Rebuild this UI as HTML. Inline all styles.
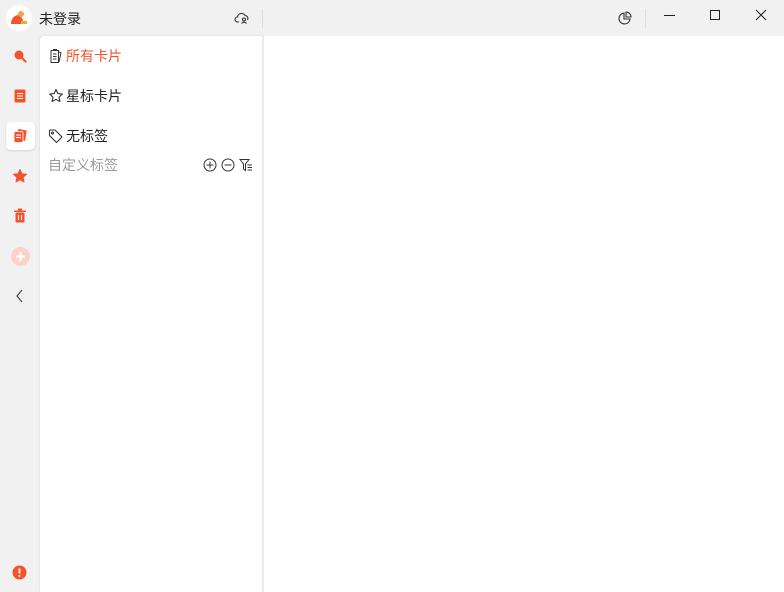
<!DOCTYPE html>
<html><head><meta charset="utf-8"><style>
*{margin:0;padding:0;box-sizing:border-box}
body{width:784px;height:592px;background:#f1f1f1;font-family:"Liberation Sans","Noto Sans CJK SC",sans-serif;position:relative;overflow:hidden}
.abs{position:absolute}
.panel{left:40px;top:36px;width:222px;height:556px;background:#fff;border-radius:4px 0 0 0;box-shadow:0 0 2px rgba(0,0,0,.12)}
.main{left:263px;top:36px;width:521px;height:556px;background:#fff;border-left:1px solid #ececec}
.item{position:absolute;left:8px;font-size:14px;color:#222;display:flex;align-items:center;gap:2px}
svg{display:block}
</style></head><body>
<div class="abs" style="left:6px;top:5px;width:26px;height:26px;border-radius:50%;background:#fff"></div>
<svg class="abs" style="left:9px;top:9px" width="20" height="18" viewBox="0 0 20 18"><path d="M2 14 Q3 7 9 6 Q13 7 14 12 L14 15 L2 15Z" fill="#f2542d"/><circle cx="12" cy="5" r="3" fill="#f7a24b"/><rect x="12" y="12" width="6" height="3" fill="#f7a24b"/></svg>
<div class="abs" style="left:39px;top:9px;font-size:14px;color:#222">未登录</div>
<svg class="abs" style="left:234px;top:11px" width="16" height="14" viewBox="0 0 16 14" fill="none" stroke="#333" stroke-width="1.1"><path d="M5 11H3.5A2.5 2.5 0 0 1 3.5 6A4 4 0 0 1 11 4.5A3 3 0 0 1 13.5 9"/><circle cx="10" cy="8.5" r="1.5"/><path d="M7.5 12.5Q10 10 12.5 12.5"/></svg>
<div class="abs" style="left:262px;top:9px;width:1px;height:19px;background:#ddd"></div>
<svg class="abs" style="left:617px;top:10px" width="16" height="16" viewBox="0 0 16 16" fill="none" stroke="#333" stroke-width="1.1"><path d="M7 3A5.5 5.5 0 1 0 13 9H7Z"/><path d="M9 2V7H14A5 5 0 0 0 9 2Z"/></svg>
<div class="abs" style="left:645px;top:9px;width:1px;height:19px;background:#ddd"></div>
<div class="abs" style="left:664px;top:15px;width:11px;height:1px;background:#222"></div>
<div class="abs" style="left:710px;top:10px;width:10px;height:10px;border:1px solid #222"></div>
<svg class="abs" style="left:755px;top:9px" width="12" height="12" viewBox="0 0 12 12" stroke="#222" stroke-width="1"><path d="M1 1L11 11M11 1L1 11"/></svg>

<svg class="abs" style="left:13px;top:49px" width="14" height="14" viewBox="0 0 14 14"><circle cx="6" cy="6" r="4.5" fill="#f2542d"/><path d="M9 9L12.5 12.5" stroke="#f2542d" stroke-width="2.2" stroke-linecap="round"/></svg>
<svg class="abs" style="left:14px;top:89px" width="12" height="14" viewBox="0 0 12 14"><rect x="0.5" y="0.5" width="11" height="13" rx="1.5" fill="#f2542d"/><path d="M3 4.5H9M3 7H9M3 9.5H9" stroke="#fff" stroke-width="1"/></svg>
<div class="abs" style="left:6px;top:122px;width:29px;height:28px;background:#fff;border-radius:5px;box-shadow:0 1px 2px rgba(0,0,0,.12)"></div>
<svg class="abs" style="left:13px;top:129px" width="14" height="14" viewBox="0 0 14 14"><rect x="4" y="0.5" width="9" height="11" rx="1.5" fill="#f2542d" transform="rotate(10 8 6)"/><rect x="1" y="2.5" width="9" height="11" rx="1.5" fill="#f2542d" stroke="#fff" stroke-width="0.8"/><path d="M3 6H8M3 8.5H8" stroke="#fff" stroke-width="1"/></svg>
<svg class="abs" style="left:13px;top:169px" width="14" height="14" viewBox="0 0 14 14"><path d="M7 0.5L9 4.8 13.5 5.3 10.1 8.4 11 13 7 10.7 3 13 3.9 8.4 0.5 5.3 5 4.8Z" fill="#f2542d" stroke="#f2542d" stroke-linejoin="round"/></svg>
<svg class="abs" style="left:13px;top:208px" width="14" height="15" viewBox="0 0 14 15"><rect x="1" y="2.5" width="12" height="1.5" fill="#f2542d"/><rect x="5" y="0.5" width="4" height="2" fill="#f2542d"/><rect x="2.5" y="4.5" width="9" height="10" rx="1.5" fill="#f2542d"/><path d="M5.5 7V12M8.5 7V12" stroke="#fff" stroke-width="1"/></svg>
<div class="abs" style="left:11px;top:247px;width:19px;height:19px;border-radius:50%;background:#fdd2c8"></div>
<svg class="abs" style="left:15px;top:251px" width="11" height="11" viewBox="0 0 11 11" stroke="#fff" stroke-width="2"><path d="M5.5 1V10M1 5.5H10"/></svg>
<svg class="abs" style="left:15px;top:289px" width="9" height="14" viewBox="0 0 9 14" fill="none" stroke="#444" stroke-width="1.2"><path d="M7 1L2 7L7 13"/></svg>
<svg class="abs" style="left:12px;top:565px" width="15" height="15" viewBox="0 0 15 15"><circle cx="7.5" cy="7.5" r="7" fill="#f2542d"/><path d="M7.5 3.5V8.5" stroke="#fff" stroke-width="1.8"/><circle cx="7.5" cy="11" r="1" fill="#fff"/></svg>

<div class="abs panel">
  <div class="item" style="top:10px;color:#f2542d"><svg width="16" height="16" viewBox="0 0 16 16" fill="none" stroke="#333" stroke-width="1"><path d="M3 2.5H10.5V14.5H3Z"/><path d="M10.5 4L13 4.8 11 14"/><path d="M5 6H8.5M5 8.5H8.5M5 11H8.5"/><path d="M5 1.5H9"/></svg>所有卡片</div>
  <div class="item" style="top:50px"><svg width="16" height="16" viewBox="0 0 16 16" fill="none" stroke="#333" stroke-width="1.1"><path d="M8 1.5L9.9 5.6 14.3 6.1 11 9.1 11.9 13.5 8 11.3 4.1 13.5 5 9.1 1.7 6.1 6.1 5.6Z" stroke-linejoin="round"/></svg>星标卡片</div>
  <div class="item" style="top:90px"><svg width="16" height="16" viewBox="0 0 16 16" fill="none" stroke="#333" stroke-width="1.1"><path d="M1.5 2.5V7.5L8.5 14.5 14 9 7 2H2Z" stroke-linejoin="round"/><circle cx="4.5" cy="5" r="1"/></svg>无标签</div>
  <div class="abs" style="left:8px;top:119px;font-size:14px;color:#9a9a9a">自定义标签</div>
  <svg class="abs" style="left:163px;top:122px" width="14" height="14" viewBox="0 0 14 14" fill="none" stroke="#333" stroke-width="1"><circle cx="7" cy="7" r="6"/><path d="M7 3.5V10.5M3.5 7H10.5"/></svg>
  <svg class="abs" style="left:181px;top:122px" width="14" height="14" viewBox="0 0 14 14" fill="none" stroke="#333" stroke-width="1"><circle cx="7" cy="7" r="6"/><path d="M3.5 7H10.5"/></svg>
  <svg class="abs" style="left:199px;top:122px" width="14" height="14" viewBox="0 0 14 14" fill="none" stroke="#333" stroke-width="1"><path d="M1 1.5H10L6.5 6V12.5L4.5 11V6Z"/><path d="M8.5 7H13M8.5 9.5H13M8.5 12H13"/></svg>
</div>
<div class="abs main"></div>
</body></html>
